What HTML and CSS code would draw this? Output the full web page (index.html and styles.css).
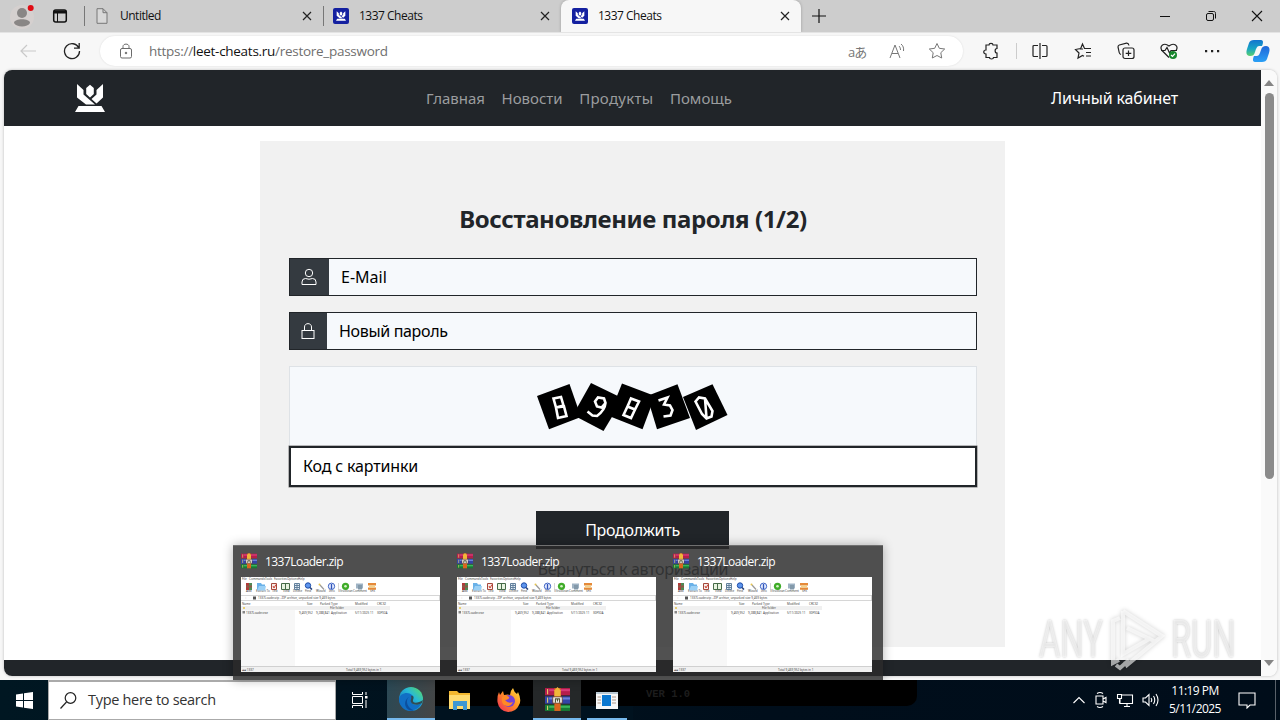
FILE: index.html
```html
<!DOCTYPE html>
<html lang="ru">
<head>
  <meta charset="UTF-8" />
  <meta name="viewport" content="width=device-width, initial-scale=1.0"/>
  <title>1337 Cheats</title>
  <link rel="stylesheet" href="styles.css">
</head>
<body>
  <svg class="defs" width="0" height="0">
    <defs>
      <linearGradient id="gEdge" x1="1" y1="0" x2="0" y2="1"><stop offset="0" stop-color="#5fe05a"/><stop offset=".4" stop-color="#27b9d8"/><stop offset="1" stop-color="#0b57b0"/></linearGradient>
      <linearGradient id="gFox" x1="1" y1="0" x2="0" y2="1"><stop offset="0" stop-color="#ffe14a"/><stop offset=".45" stop-color="#ff9322"/><stop offset="1" stop-color="#f0245c"/></linearGradient>
      <linearGradient id="gCop1" x1="0" y1="0" x2="0" y2="1"><stop offset="0" stop-color="#1274cf"/><stop offset=".55" stop-color="#18a6c4"/><stop offset="1" stop-color="#5bd06c"/></linearGradient>
      <linearGradient id="gCop2" x1="0" y1="0" x2="0" y2="1"><stop offset="0" stop-color="#1f66d8"/><stop offset="1" stop-color="#2aa0f5"/></linearGradient>
    </defs>
    <symbol id="crown" viewBox="0 0 30 28">
      <path d="M2 0 8.500 6V10.500L20 20.500H11L2 13.500ZM28 0V13.500L21.500 19.500 16.500 15 21.500 10.500V6ZM15 .7 18.800 4V10L15 13.500 11.200 10V4ZM3.500 22H26.500L30 28H0Z"/>
    </symbol>
    <symbol id="close" viewBox="0 0 10 10"><path d="M1 1 9 9M9 1 1 9" fill="none" stroke="#222" stroke-width="1.200"/></symbol>
    <symbol id="rar" viewBox="0 0 24 24">
      <path fill="#b51e4b" d="M0 1H24V8H0Z"/><path fill="#3344a8" d="M0 9H24V16H0Z"/><path fill="#177a35" d="M0 17H24V23H0Z"/>
      <path fill="#d73b79" d="M4 2H24V4H4Z"/><path fill="#6b82d8" d="M4 10H24V12H4Z"/><path fill="#3bb65b" d="M4 18H24V20H4Z"/>
      <path stroke="#e8d36a" stroke-width="1" d="M2.500 2V7M2.500 10V15M2.500 18V22"/>
      <path fill="#d9651f" d="M9 1H15V23H9Z"/><path fill="#f0b73a" d="M9 3 12 0 15 3V9H9Z"/>
      <path fill="#fff" stroke="#6a3a20" stroke-width=".8" d="M7.500 9.500H16.500V15.500H7.500Z"/><path fill="none" stroke="#553" stroke-width="1.200" d="M10 15V11.500H14V15M12 11V14"/>
    </symbol>
    <symbol id="archive" viewBox="0 0 199 95">
      <path fill="#fff" d="M0 0H199V95H0Z"/>
      <path fill="#f7f7f7" d="M0 33H54V89H0Z"/>
      <path fill="#f0f0f0" d="M0 29H149V33H0Z"/>
      <path fill="#f0f0f0" d="M0 89H199V95H0Z"/>
      <path stroke="#bbb" stroke-width=".6" d="M0 18.500H199M0 23.500H199M0 89.500H199M97.500 6V15M198.500 18.500V23.500"/>
      <g font-family="Noto Sans" font-size="3" fill="#444">
        <text x="1" y="3">File</text><text x="8" y="3">Commands</text><text x="24" y="3">Tools</text><text x="33" y="3">Favorites</text><text x="46" y="3">Options</text><text x="57" y="3">Help</text>
        <text x="5" y="15.400">Add</text><text x="15" y="15.400">Extract To</text><text x="31" y="15.400">Test</text><text x="42" y="15.400">View</text><text x="52" y="15.400">Delete</text><text x="64" y="15.400">Find</text><text x="75" y="15.400">Wizard</text><text x="88" y="15.400">Info</text><text x="98" y="15.400">VirusScan</text><text x="112" y="15.400">Comment</text><text x="129" y="15.400">SFX</text>
        <text x="4" y="22" fill="#888">↑</text><text x="17" y="22">1337Loader.zip - ZIP archive, unpacked size 9,469 bytes</text>
        <text x="1" y="27.700">Name</text><text x="66" y="27.700">Size</text><text x="79" y="27.700">Packed</text><text x="90" y="27.700">Type</text><text x="114" y="27.700">Modified</text><text x="136" y="27.700">CRC32</text>
        <text x="89" y="32.300">File folder</text>
        <text x="5" y="36.500">1337Loader.exe</text><text x="58" y="36.500">9,469,952</text><text x="75" y="36.500">9,288,841</text><text x="90" y="36.500">Application</text><text x="114" y="36.500">5/11/2025 11</text><text x="136" y="36.500">30F92A</text>
        <text x="1" y="93.500">▰▰ 1337</text><text x="105" y="93.500">Total 9,469,952 bytes in 1</text>
      </g>
      <path fill="#b13a3a" d="M5 6H8V13H5Z"/><path fill="#4f8a55" d="M8 6H11V13H8Z"/><path fill="#8d5a48" d="M5 8.500H11V10.500H5Z"/>
      <path fill="#6ab1e8" d="M16 6H20L21 7.500H24V13H16Z"/><path fill="#9bd0f5" d="M18 9H25L24 13.500H16Z"/>
      <path fill="#f5ece8" stroke="#a5483c" d="M30.500 6.500H35.500V12.500H30.500Z"/><path stroke="#cf4234" d="M32 9 33 11 35 7.500" fill="none"/>
      <path fill="#e7f3e0" stroke="#466b48" d="M40.500 6.500H48.500V12.500H40.500ZM44.500 7V12"/>
      <path fill="#e4eef7" stroke="#62809c" d="M53.500 6.500H58.500V12.500H53.500ZM54 8.500H58M54 10.500H58M56 7V12"/>
      <circle cx="67" cy="8.500" r="2.700" fill="#5e95ed" stroke="#1e4da8"/><path stroke="#1e3d78" stroke-width="1.500" d="M69 10.500 71 12.500"/>
      <path stroke="#999" stroke-width="1.200" d="M79 8 83 12.500"/><circle cx="78.500" cy="7.500" r="1" fill="#e7c44c"/>
      <circle cx="90.500" cy="9.300" r="3.200" fill="#e4ecff" stroke="#4166c5"/><path stroke="#3154b8" stroke-width="1.300" d="M90.500 7V12"/>
      <circle cx="104.500" cy="9.300" r="3.600" fill="#3fac29"/><circle cx="104.500" cy="9.300" r="1.300" fill="#d8f4c9"/>
      <path fill="#9fb3c4" d="M115 6.500H122V11.500H115Z"/><path fill="#8399aa" d="M117 8H121V12.500H117Z"/>
      <path fill="#e58a39" d="M127 6H135V8.500H127ZM127 10.500H135V12.800H127Z"/><path fill="#f3d28b" d="M128 8.500H134V10.500H128Z"/>
      <path fill="#555" d="M12 19.500H15V22.500H12Z"/><path fill="#e8ce75" d="M2 30H4V32H2Z"/><path fill="#888" d="M1.500 34H4V36.500H1.500Z"/>
    </symbol>
  </svg>

  <div class="browser">
    <div class="tabs">
      <div class="tab-tools">
        <svg width="32" height="32" viewBox="0 0 32 32"><circle cx="16" cy="17" r="12" fill="#d5d0cf"/><circle cx="16" cy="13" r="5" fill="#898685"/><path d="M8 23C8 18 24 18 24 23 22 27.500 10 27.500 8 23Z" fill="#898685"/><circle cx="24.700" cy="8" r="3" fill="#e00b13"/></svg>
        <svg width="16" height="16" viewBox="0 0 16 16"><rect x="1.700" y="2" width="12.600" height="12" rx="2" fill="none" stroke="#111" stroke-width="1.500"/><path d="M2 2.500H14V5.500H2Z" fill="#111"/><path d="M5.500 5V14" stroke="#111"/></svg>
      </div>
      <div class="tab first">
        <svg class="favicon" viewBox="0 0 16 16"><path d="M3 .7H9L13 4.700V15.300H3ZM9 .7V4.700H13" fill="#d8d8d8" stroke="#777"/></svg>
        <span>Untitled</span>
        <svg class="close"><use href="#close"/></svg>
      </div>
      <div class="tab second">
        <div class="favicon site"><svg><use href="#crown"/></svg></div>
        <span>1337 Cheats</span>
        <svg class="close"><use href="#close"/></svg>
      </div>
      <div class="tab active">
        <div class="favicon site"><svg><use href="#crown"/></svg></div>
        <span>1337 Cheats</span>
        <svg class="close"><use href="#close"/></svg>
      </div>
      <div class="tab-rest">
        <svg width="14" height="14" viewBox="0 0 14 14"><path d="M7 0V14M0 7H14" stroke="#111" stroke-width="1.200"/></svg>
        <div class="window-buttons">
          <svg width="12" height="12" viewBox="0 0 12 12"><path d="M1 6.500H11" stroke="#111"/></svg>
          <svg width="12" height="12" viewBox="0 0 12 12" fill="none" stroke="#111"><rect x="1.500" y="3.500" width="7" height="7" rx="1.500"/><path d="M3.500 1.500H8.500C10 1.500 10.500 2 10.500 3.500V8.500"/></svg>
          <svg width="12" height="12" viewBox="0 0 12 12"><path d="M1 1 11 11M11 1 1 11" stroke="#111" stroke-width="1.100"/></svg>
        </div>
      </div>
    </div>

    <div class="toolbar">
      <svg class="back" width="16" height="14" viewBox="0 0 16 14"><path d="M16 7H1M7 1 1 7 7 13" fill="none" stroke="#c9c9c9" stroke-width="1.200"/></svg>
      <svg class="reload" width="18" height="18" viewBox="0 0 18 18"><path d="M15.800 6A7.500 7.500 0 1 0 16.500 9M16.200 1V6.200H11" fill="none" stroke="#222" stroke-width="1.300"/></svg>
      <div class="address">
        <svg width="14" height="16" viewBox="0 0 14 16" fill="none" stroke="#6b6b6b"><rect x="1.500" y="5.500" width="11" height="9.500" rx="1.500"/><path d="M4 5.500V3.500C4 .3 10 .3 10 3.500V5.500"/><circle cx="7" cy="10" r=".8" fill="#666"/></svg>
        <span class="url">https://<b>leet-cheats.ru</b>/restore_password</span>
        <span class="translate">aあ</span>
        <svg class="read" width="17" height="16" viewBox="0 0 17 16" fill="none" stroke="#777"><path d="M1 15 6 2 11 15M3 10.500H9M10 3C11 4 11.500 5.500 11.500 7M12 1C14 2.500 15 5 14.500 8"/></svg>
        <svg width="18" height="18" viewBox="0 0 18 18"><path d="M9 1.500 11.300 6.300 16.700 7 12.800 10.700 13.700 16 9 13.500 4.300 16 5.200 10.700 1.300 7 6.700 6.300Z" fill="none" stroke="#777"/></svg>
      </div>
      <div class="actions">
        <svg viewBox="0 0 18 18"><path d="M4 3H7C7 .8 11 .8 11 3H15V6.500C12.500 6.500 12.500 11 15 11V15.500H11.500C11.500 17.500 7.500 17.500 7.500 15.500H4V12C1 12 1 8 4 8Z"/></svg>
        <i></i>
        <svg viewBox="0 0 18 18"><path d="M7 3.500H3Q2 3.500 2 4.500V13.500Q2 14.500 3 14.500H7M11 3.500H15Q16 3.500 16 4.500V13.500Q16 14.500 15 14.500H11M9 1V17"/></svg>
        <svg viewBox="0 0 18 18"><path d="M9 7H6.500L8.500 2 10.500 6.500H17M12 10.500H17M12 14H17M6.500 6.500 1.500 7.500 5 11 4 16 8.500 13.500 10 14.300"/></svg>
        <svg viewBox="0 0 18 18"><rect x="6" y="6" width="11" height="10.500" rx="2"/><path d="M11.500 8.500V14M8.700 11.300H14.300M4 12.500Q2.500 12 2.200 10.500L1 5Q1 3.500 2.300 3L9.500 1.200Q11.500 1 12 3.500"/></svg>
        <svg viewBox="0 0 18 18"><path d="M9 15.500 2 8.500C-1 4 4 0 9 4 14 0 19 4 16 8.500M1 8.500H5L7 5.500 9.500 11 11 8.500H17"/><circle cx="13" cy="13" r="4" fill="#16852c" stroke="none"/><path d="M11 13 12.500 14.500 15 11.700" stroke="#fff"/></svg>
        <svg viewBox="0 0 18 18"><path d="M2 8H4.200V10.200H2ZM8 8H10.200V10.200H8ZM14 8H16.200V10.200H14Z" fill="#222" stroke="none"/></svg>
        <svg class="copilot" viewBox="0 0 24 24"><path d="M8 1H15C18 1 17 5 16 7H13C11 7 10 10 9 13 8 16 7 17 4 17 0 17 0 13 1 10L3 4Q4 1 8 1Z" fill="url(#gCop1)"/><path d="M20 7C24 7 24 11 23 14L21 20Q20 23 16 23H9C6 23 7 19 8 17H11C13 17 14 14 15 11 16 8 17 7 20 7Z" fill="url(#gCop2)"/></svg>
      </div>
    </div>

    <div class="viewport">
      <div class="page">
        <nav class="navbar">
          <svg class="logo"><use href="#crown"/></svg>
          <div class="nav-links">
            <a>Главная</a>
            <a>Новости</a>
            <a class="products">Продукты</a>
            <a>Помощь</a>
          </div>
          <a class="account">Личный кабинет</a>
        </nav>
        <main class="card">
          <h1>Восстановление пароля (1/2)</h1>
          <div class="field">
            <div class="addon email"><svg viewBox="0 0 16 18"><circle cx="8" cy="5" r="3.700"/><path d="M1 16.500V14Q1 10.500 4.500 10.500 8 12 11.500 10.500 15 10.500 15 14V16.500Z"/></svg></div>
            <span>E-Mail</span>
          </div>
          <div class="field password">
            <div class="addon"><svg viewBox="0 0 16 18"><rect x="2" y="8.500" width="12" height="8"/><path d="M4.500 8.500V5C4.500 .5 11.500 .5 11.500 5V8.500"/></svg></div>
            <span>Новый пароль</span>
          </div>
          <div class="captcha">
            <svg width="192" height="50" viewBox="0 0 192 50">
              <g fill="#000">
                <path d="M0 13 32.500 1 44 34 12 46.300Z"/>
                <path d="M54 0 86 15.500 66.500 48 36 32Z"/>
                <path d="M85 .5 118 13 105.500 46.300 72 33Z"/>
                <path d="M110 13 140.500 1.300 153 35 120 46.300Z"/>
                <path d="M146 14 175.500 1.300 190.500 32 159 47Z"/>
              </g>
              <g fill="none" stroke="#fff" stroke-width="2.600">
                <path d="M16.500 15.500 24 14 26.500 22.500 19 24.500ZM19 24.500 27 23.500 29.500 33 21 35Z"/>
                <path d="M68.500 20 64.500 24.500 60 23.500 58 18.500 61 14.500 67 15.500 68.500 20Q68 27 60 33L55.500 32.500 50.500 28.500"/>
                <path d="M94 15.500 102 18.500 98 26.500 90.500 23.500ZM90.500 23.500 98 26.500 94 35 86.500 32Z"/>
                <path d="M121.500 17.500 130.500 14.500 127 21.500 133 22.500 135.500 27 133.500 32.500 126.500 33.500"/>
                <path d="M158.500 18.500 162 14.500 168 15.500 175.500 28 174.500 33.500 169.500 35.500 165 31ZM168 15.500 169.500 35"/>
              </g>
            </svg>
          </div>
          <div class="code-input">Код с картинки</div>
          <div class="submit">Продолжить</div>
          <a class="back-link">Вернуться к авторизации</a>
        </main>
        <div class="footer"></div>
      </div>
      <div class="scrollbar">
        <svg width="10" height="6" viewBox="0 0 10 6"><path d="M5 0 10 6H0Z"/></svg>
        <div class="thumb"></div>
        <svg width="10" height="6" viewBox="0 0 10 6"><path d="M0 0H10L5 6Z"/></svg>
      </div>
    </div>
  </div>

  <div class="taskbar">
    <div class="start"><svg width="17" height="17" viewBox="0 0 17 17"><path d="M0 2.500 7 1.500V8H0ZM8 1.300 17 0V8H8ZM0 9H7V15.500L0 14.500ZM8 9H17V17L8 15.700Z" fill="#fff"/></svg></div>
    <div class="search">
      <svg width="17" height="17" viewBox="0 0 17 17"><circle cx="10.500" cy="6" r="5.300"/><path d="M6.500 10 .5 16.500"/></svg>
      <span>Type here to search</span>
    </div>
    <div class="task view"><svg width="17" height="16" viewBox="0 0 17 16" fill="none" stroke="#fff"><path d="M1.500 0V2.500H11.500V0M1.500 4.500H11.500V11.500H1.500ZM1.500 16V13.500H11.500V16M15 0V3M15 8V16"/><path d="M14 4H16.500V6.500H14Z" fill="#fff" stroke="none"/></svg></div>
    <div class="task edge"><svg width="26" height="26" viewBox="0 0 26 26"><circle cx="13" cy="13" r="12" fill="url(#gEdge)"/><path d="M1 13C2 7 10 5 14 9 17 13 13 15 14 17 16 20 21 19 24 17 20 25 10 27 5 22 2 19 1 16 1 13Z" fill="#116fc5"/><path d="M11 11C7 14 9 22 16 24.500 7 26 4 15 11 11Z" fill="#0c4f9e"/><path d="M13 10C16 9 16 12 15 14 14 17 19 18 25 14L24 17C20 20 14 19 13 16 12 14 14 13 13 10Z" fill="#314c54"/></svg></div>
    <div class="task"><svg width="24" height="22" viewBox="0 0 24 22"><path d="M1 2H9L11 4H22V20H1Z" fill="#f3b72f"/><path d="M1 6H22V20H1Z" fill="#ffdb70"/><path d="M5 12H19V21H15V17H9V21H5Z" fill="#3e97d3"/></svg></div>
    <div class="task"><svg width="25" height="26" viewBox="0 0 25 26"><path d="M3 5 4 8 7 4 8 8Q12 7 14 8 14 4 17 1 18 5 21 7L22 5Q26 13 23 18 20 25 12 25 3 24 1.500 15 1 9 3 5Z" fill="url(#gFox)"/><circle cx="13" cy="14" r="6" fill="#7442d6"/><path d="M6 10Q10 7 13 10 14 12 9 13 12 17 17 15 14 21 8 18 5 15 6 10Z" fill="#ff8a25"/></svg></div>
    <div class="task winrar"><svg width="25" height="25"><use href="#rar"/></svg></div>
    <div class="task app"><svg width="22" height="17" viewBox="0 0 22 17"><path d="M0 0H22V17H0Z" fill="#f7f7f7"/><path d="M0 0H22V2H0Z" fill="#b9c8d2"/><path d="M6 3H15V14H6Z" fill="#0b78d0"/><path d="M1.500 5H5M1.500 8H5M1.500 11H5M16 5H20M16 8H20M16 11H20" stroke="#b09888"/></svg></div>
    <span class="ver">VER 1.0</span>
    <div class="tray">
      <svg width="14" height="16" viewBox="0 0 14 16"><path d="M1.500 11 7 5.500 12.500 11"/></svg>
      <svg width="14" height="18" viewBox="0 0 14 18"><path d="M2 5H9V13H2ZM9 8 12 6.500V11.500L9 10M3 2.500Q6 .5 9 2.500M3 15.500Q6 17.500 9 15.500"/></svg>
      <svg width="18" height="16" viewBox="0 0 18 16"><path d="M6 3H16.500V11.500H4V7M8 14.500H14M11 11.500V14.500M1.500 2.500H5.500V6.500H1.500ZM3.500 6.500V11.500"/></svg>
      <svg width="18" height="16" viewBox="0 0 18 16"><path d="M1 6H3.500L7 2.500V13.500L3.500 10H1ZM9 6Q10.500 8 9 10M11.500 4Q14 8 11.500 12M14 2Q18 8 14 14"/></svg>
    </div>
    <div class="clock"><span>11:19 PM</span><span>5/11/2025</span></div>
    <svg class="notice" width="18" height="17" viewBox="0 0 18 17"><path d="M1 1H17V13H12L9 16V13H1Z"/></svg>
    <div class="show-desktop"></div>
  </div>

  <div class="previews">
    <div class="preview"><div class="preview-title"><svg><use href="#rar"/></svg>1337Loader.zip</div><svg class="shot"><use href="#archive"/></svg></div>
    <div class="preview"><div class="preview-title"><svg><use href="#rar"/></svg>1337Loader.zip</div><svg class="shot"><use href="#archive"/></svg></div>
    <div class="preview"><div class="preview-title"><svg><use href="#rar"/></svg>1337Loader.zip</div><svg class="shot"><use href="#archive"/></svg></div>
  </div>

  <div class="watermark">
    <span>ANY</span>
    <svg width="56" height="66" viewBox="0 0 56 66"><path d="M14 4 53 29 18 58 16 54M18 21 45 34M14 4V47L42 31M11 11 4 14V56L10 53M7 58 11 61 20 53"/></svg>
    <span>RUN</span>
  </div>
</body>
</html>
```
FILE: styles.css
```css
:root {
  --dark: #212529;
  --chrome: #f7f7f7;
  --tabs: #cdcdcd;
  --ui: 'Open Sans', 'Noto Sans', sans-serif;
  --site: 'Noto Sans', sans-serif;
}
* { box-sizing: border-box; }
body {
  margin: 0;
  width: 1280px;
  height: 720px;
  overflow: hidden;
  position: relative;
  display: flex;
  flex-direction: column;
  background: var(--chrome);
  font-family: var(--ui);
  color: #111;
}
svg { display: block; flex: none; }
.defs { position: absolute; }
.browser {
  height: 680px;
  display: flex;
  flex-direction: column;
}

/* tab strip */
.tabs {
  height: 32px;
  display: flex;
  background: var(--tabs);
  font-size: 12px;
  letter-spacing: -0.5px;
}
.tab-tools {
  width: 84px;
  padding-left: 6px;
  display: flex;
  align-items: center;
  gap: 14px;
}
.tab {
  width: 239px;
  display: flex;
  align-items: center;
  padding: 0 11px 0 10px;
}
.tab span {
  flex: 1;
  margin: -2px 0 0 10px;
  white-space: nowrap;
}
.tab.first, .tab.second {
  background: linear-gradient(#777, #777) left center / 1px 20px no-repeat;
}
.tab.second { width: 238px; }
.tab.active {
  width: 240px;
  padding-left: 11px;
  background: var(--chrome);
  border-radius: 8px 8px 0 0;
  box-shadow: 0 0 3px rgba(0,0,0,0.25);
}
.favicon { width: 16px; height: 16px; flex: none; }
.favicon.site {
  background: #1420a0;
  border-radius: 2px;
  padding: 3px;
}
.favicon.site svg { width: 10px; height: 10px; fill: #fff; }
.close { width: 10px; height: 10px; }
.tab-rest {
  flex: 1;
  display: flex;
  align-items: center;
  justify-content: space-between;
  padding: 0 17px 0 11px;
}
.window-buttons { display: flex; gap: 34px; }

/* toolbar */
.toolbar {
  height: 38px;
  display: flex;
  align-items: center;
  padding-bottom: 1px;
  background: var(--chrome);
  border-top: 1px solid #e4e4e4;
}
.back { margin-left: 20px; }
.reload { margin-left: 27px; }
.address {
  width: 863px;
  height: 30px;
  margin-left: 19px;
  padding: 0 17px 0 19px;
  display: flex;
  align-items: center;
  background: #fff;
  border-radius: 15px;
  box-shadow: 0 0 2px rgba(0,0,0,0.12);
}
.url {
  flex: 1;
  margin-left: 16px;
  font-size: 13.5px;
  letter-spacing: -0.28px;
  color: #6f6f6f;
}
.url b { font-weight: 400; color: #111; }
.translate {
  width: 20px;
  font: 13px 'Open Sans', 'Noto Sans CJK JP', sans-serif;
  letter-spacing: -1px;
  color: #777;
  white-space: nowrap;
}
.read { margin: 0 22px 0 21px; }
.actions {
  flex: 1;
  display: flex;
  align-items: center;
  justify-content: space-between;
  padding: 0 10px 0 19px;
}
.actions svg {
  width: 18px;
  height: 18px;
  fill: none;
  stroke: #222;
  stroke-width: 1.2;
}
.actions i { width: 1px; height: 16px; background: #ccc; margin: 0 -11px 0 -9px; }
.actions .copilot { width: 24px; height: 24px; stroke: none; }

/* page */
.viewport {
  height: 606px;
  margin: 0 3px 0 4px;
  display: flex;
  background: #fff;
  border-radius: 8px;
  overflow: hidden;
  box-shadow: 0 0 3px rgba(0,0,0,0.25);
}
.page {
  width: 1257px;
  display: flex;
  flex-direction: column;
  font-family: var(--site);
  font-size: 16px;
}
.navbar {
  height: 56px;
  padding: 0 83px 0 71px;
  display: flex;
  align-items: center;
  background: var(--dark);
}
.logo { width: 30px; height: 28px; fill: #fff; }
.nav-links {
  flex: 1;
  margin-left: 321px;
  display: flex;
  gap: 16.5px;
  font-size: 15px;
  color: #9b9d9f;
}
.products { letter-spacing: 0.3px; }
.account { color: #fff; letter-spacing: -0.15px; }
.card {
  width: 745px;
  height: 506px;
  margin: 15px 0 13px 256px;
  padding: 61px 28px 0 29px;
  display: flex;
  flex-direction: column;
  align-items: center;
  background: #f1f1f1;
}
h1 {
  margin: 0 0 22px;
  font-size: 24px;
  line-height: 34px;
  font-weight: 700;
  letter-spacing: -0.37px;
  color: var(--dark);
  white-space: nowrap;
}
.field {
  width: 688px;
  height: 38px;
  margin-bottom: 16px;
  display: flex;
  align-items: center;
  background: #f6f9fc;
  border: 1px solid var(--dark);
  color: #000;
}
.field.password { letter-spacing: -0.33px; }
.addon {
  width: 37px;
  height: 36px;
  margin-right: 12px;
  padding-right: 2px;
  display: flex;
  align-items: center;
  justify-content: center;
  background: #343a40;
}
.addon.email { width: 39px; }
.addon svg { width: 16px; height: 18px; fill: none; stroke: #fff; }
.captcha {
  width: 688px;
  height: 80px;
  display: flex;
  justify-content: center;
  padding-top: 16px;
  background: #f6f9fc;
  border: 1px solid #dee2e6;
  border-bottom: 0;
}
.code-input {
  width: 688px;
  height: 41px;
  padding-left: 12px;
  line-height: 37px;
  background: #fff;
  border: 2px solid var(--dark);
  box-shadow: 0 0 0 0.5px #777;
  letter-spacing: -0.15px;
  color: #000;
}
.submit {
  width: 193px;
  height: 38px;
  margin: 24px 1px 0 0;
  line-height: 38px;
  text-align: center;
  letter-spacing: -0.3px;
  background: var(--dark);
  color: #fff;
}
.back-link {
  margin-top: 9px;
  letter-spacing: -0.3px;
  color: #50555a;
  white-space: nowrap;
}
.footer { height: 16px; background: var(--dark); }
.scrollbar {
  width: 16px;
  padding: 10px 0;
  display: flex;
  flex-direction: column;
  align-items: center;
  background: #fafafa;
}
.scrollbar svg { fill: #858585; }
.thumb {
  width: 9px;
  height: 386px;
  margin: 7px 0 auto;
  background: #8b8b8b;
  border-radius: 5px;
}

/* taskbar */
.taskbar {
  height: 40px;
  display: flex;
  align-items: center;
  background: linear-gradient(90deg, #001722, #000e1b 60%, #000d1a);
  color: #fff;
}
.start { width: 48px; padding-left: 16px; }
.search {
  width: 288px;
  height: 40px;
  padding-left: 11px;
  display: flex;
  align-items: center;
  background: #fff;
  border: 1px solid #aaa;
  border-top-width: 2px;
  color: #333;
  font-size: 14.5px;
  letter-spacing: -0.3px;
}
.search svg { fill: none; stroke: #222; stroke-width: 1.2; }
.search span { margin: -2px 0 0 11px; }
.task {
  width: 49px;
  height: 40px;
  display: flex;
  align-items: center;
  justify-content: center;
  background: linear-gradient(#000 26px, #00121f 26px);
}
.task.view { width: 51px; padding-right: 5px; background: none; }
.task.edge { width: 48px; background: linear-gradient(100deg, #2b4955, #454545); border-bottom: 2px solid #76b9ed; }
.task.winrar { width: 48px; background: #252829; border-bottom: 2px solid #76b9ed; }
.task.app { position: relative; width: 52px; }
.task.app::after {
  content: '';
  position: absolute;
  left: 6px;
  right: 6px;
  bottom: 0;
  height: 2px;
  background: #76b9ed;
}
.ver {
  width: 284px;
  height: 26px;
  padding-left: 13px;
  align-self: flex-start;
  background: #000;
  border-radius: 0 0 10px 0;
  color: #1d1d1d;
  font: 700 10.5px/29px 'Liberation Mono', monospace;
}
.tray {
  margin-left: auto;
  display: flex;
  align-items: center;
  gap: 8px;
}
.tray svg, .notice { fill: none; stroke: #fff; stroke-width: 1.1; }
.clock {
  width: 62px;
  margin-left: 4px;
  display: flex;
  flex-direction: column;
  align-items: center;
  font-size: 12px;
  line-height: 18px;
  letter-spacing: -0.55px;
  white-space: nowrap;
}
.notice { margin: 0 19px 0 12px; }
.show-desktop { width: 5px; height: 40px; border-left: 1px solid #59616a; }

/* window previews over the page */
.previews {
  position: absolute;
  left: 233px;
  top: 545px;
  width: 650px;
  height: 135px;
  padding: 0 8px;
  display: flex;
  gap: 17px;
  background: rgba(43,43,43,0.82);
  border-top: 1px solid #707070;
  box-shadow: 0 0 10px rgba(0,0,0,0.3);
  color: #fff;
}
.preview { width: 199px; }
.preview-title {
  height: 31px;
  padding-bottom: 1px;
  display: flex;
  align-items: center;
  gap: 8px;
  font-size: 12px;
  letter-spacing: -0.55px;
}
.preview-title svg { width: 16px; height: 16px; }
.shot { width: 199px; height: 95px; }

.watermark {
  position: absolute;
  left: 1039px;
  top: 607px;
  display: flex;
  align-items: center;
  gap: 6px;
  font: 51px/66px 'Roboto', sans-serif;
  color: rgba(255,255,255,0.6);
  text-shadow: 0 0 3px rgba(0,0,0,0.25);
}
.watermark span { width: 64px; transform: scaleX(0.64); transform-origin: left; }
.watermark svg { fill: none; stroke: rgba(255,255,255,0.6); stroke-width: 4; filter: drop-shadow(0 0 2px rgba(0,0,0,0.3)); }
```
